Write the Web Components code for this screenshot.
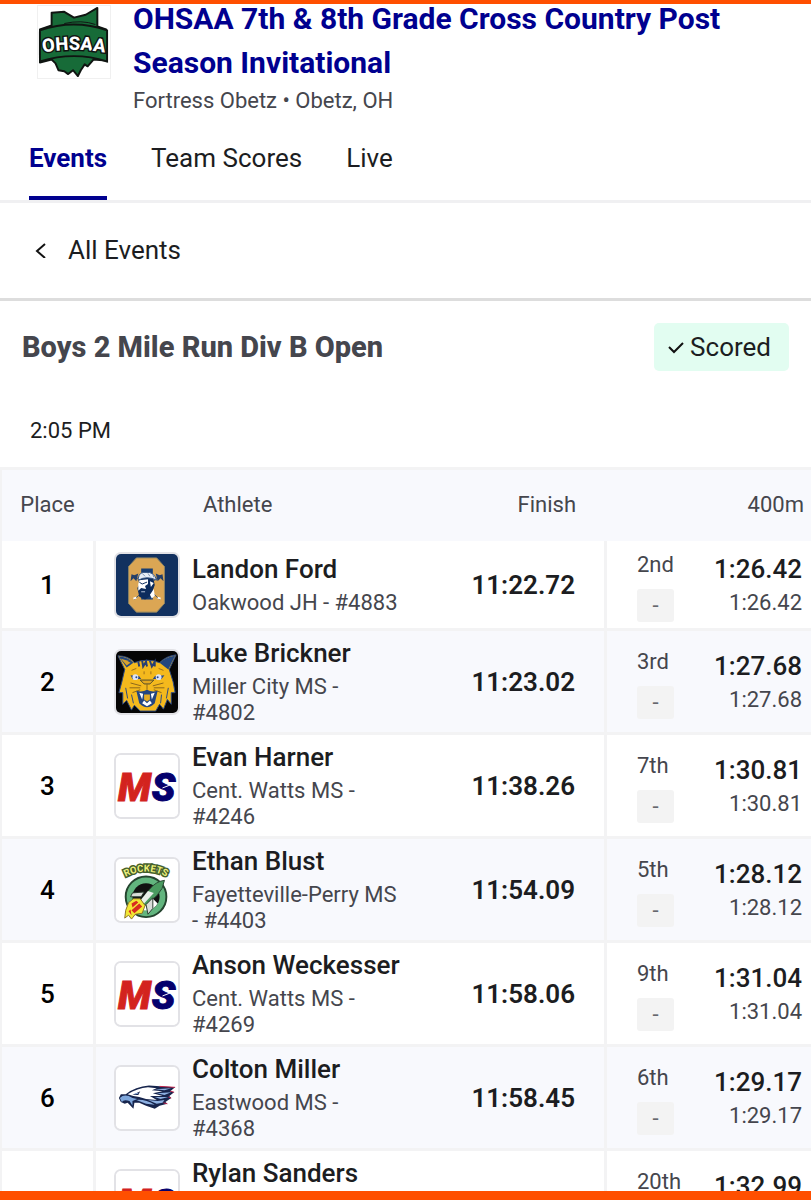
<!DOCTYPE html>
<html lang="en">
<head>
<meta charset="utf-8">
<meta name="viewport" content="width=device-width, initial-scale=1">
<title>Boys 2 Mile Run Div B Open - Results</title>
<style>
  body {
    margin: 0;
    font-family: Roboto, "Liberation Sans", sans-serif;
    color: #1c1d21;
    background: #fff;
    --brand: #00008f;
    --muted: #45464d;
    --line: #f3f3f4;
    --stripe: #f8f9fd;
  }
</style>
</head>
<body>
<page-frame>
  <meet-header>
    <span slot="title">OHSAA 7th &amp; 8th Grade Cross Country Post Season Invitational</span>
    <span slot="venue">Fortress Obetz &bull; Obetz, OH</span>
  </meet-header>
  <meet-tabs></meet-tabs>
  <back-link>All Events</back-link>
  <event-heading>
    Boys 2 Mile Run Div B Open
    <status-badge slot="status">Scored</status-badge>
    <span slot="time">2:05 PM</span>
  </event-heading>
  <results-table></results-table>
</page-frame>

<script>
const logos = {
  ohsaa: `
    <svg viewBox="0 0 74 74" role="img" aria-label="OHSAA">
      <path d="M14 7 L27 6 L37 12 L49 9 L61 2 L61 21 L70 24 V56 L57 55 L51 62 L48 60 L44 66 L41 72 L36 66 L31 70 L27 67 L21 66 L18 59 L14 55 L2 58 V24 L14 20Z" fill="#176b38" stroke="#101512" stroke-width="2" stroke-linejoin="round"/>
      <path d="M2 25 Q37 13 71 25 V57 Q37 46 2 57Z" fill="#176b38" stroke="#101512" stroke-width="2"/>
      <path d="M27 18 Q45 14 59 19" fill="none" stroke="#101512" stroke-width="1"/>
      <path id="ohsaaArc" d="M0 49 Q37 41 74 49" fill="none"/>
      <text font-family="Roboto, sans-serif" font-weight="800" font-size="19" text-anchor="middle" fill="#fff" stroke="#101512" stroke-width="3" paint-order="stroke"><textPath href="#ohsaaArc" startOffset="50%">OHSAA</textPath></text>
    </svg>`,
  oakwood: `
    <svg viewBox="0 0 64 64" role="img" aria-label="Oakwood JH">
      <rect width="64" height="64" fill="#12315f"/>
      <path d="M21 4 H42 L50 13 V51 L42 60 H21 L13 51 V13Z" fill="#dba654" stroke="#8c8465" stroke-width="1"/>
      <path d="M26 15 H38 V47 H26Z" fill="#173d72"/>
      <path d="M19 22 L45 47 M45 22 L19 47" stroke="#3a5370" stroke-width="1"/>
      <path d="M16 21 L19 22 L23 20 L21 28 L18 25 L15 28Z M48 21 L45 22 L41 20 L43 28 L46 25 L49 28Z" fill="#243f69"/>
      <path d="M23 25 L38 23 L40 32 L36 43 L30 47 L24 44 L22 35 L24 32Z" fill="#0c2c5d"/>
      <path d="M24 27 L33 26 L33 31 L30 33 L31 36 L26 35 L23 38 L23 31Z" fill="#fff"/>
      <path d="M24 29 L27 31 L32 29" fill="none" stroke="#0c2c5d" stroke-width="1"/>
      <path d="M35 28 L39 30 L36 34Z M35 42 L39 36 L40 43 L37 46Z" fill="#fff"/>
      <path d="M23 25 Q24 18 31 19 Q39 18 42 27 Q32 22 23 27Z" fill="#e6eef6" stroke="#33537f"/>
      <path d="M27 20 L30 23 M33 20 L35 23 M38 21 L39 24" stroke="#8394ad"/>
      <path d="M18 46 L21 45 M43 45 L46 46" stroke="#fff" stroke-width="2"/>
      <path d="M26 39 H30" stroke="#bac7db"/>
    </svg>`,
  miller: `
    <svg viewBox="0 0 64 64" role="img" aria-label="Miller City MS">
      <rect width="64" height="64" fill="#050505"/>
      <path d="M2 5 Q13 5 19 12 Q32 7 45 12 Q52 5 62 4 L55 19 L59 32 L61 43 L57 43 L57 55 L53 50 L49 60 L45 55 L41 62 H25 L19 56 L16 61 L11 51 L7 55 L7 43 L3 43 L6 32 L9 19Z" fill="#f4b91d" stroke="#294783" stroke-width="1"/>
      <path d="M45 12 Q52 6 61 5 L54 19Z" fill="#24477f"/>
      <path d="M3 6 Q12 6 18 12 L11 17Z" fill="#24477f"/>
      <path d="M5 8 Q11 9 15 12 L11 15Z" fill="#d8a22c"/>
      <path d="M23 11 L24 16 M27 10 L28 16 L31 11 L32 16 M35 10 L37 16 L40 11 L40 16" fill="none" stroke="#283f74" stroke-width="2"/>
      <path d="M16 20 L21 18 M44 18 L49 20 M29 21 V24 M36 21 V24" stroke="#9c6f1c"/>
      <path d="M15 25 L24 26 L26 29 L17 29Z M50 25 L40 26 L38 29 L47 29Z" fill="#294783"/>
      <circle cx="20" cy="27" r="3" fill="#dce4f8"/><circle cx="44" cy="27" r="3" fill="#dce4f8"/>
      <circle cx="21" cy="27" r="1" fill="#294783"/><circle cx="43" cy="27" r="1" fill="#294783"/>
      <path d="M25 30 H39 L35 34 H29Z" fill="#e4a820" stroke="#4d4a2c"/>
      <path d="M32 34 V40 M15 33 L26 36 M14 38 L25 38 M17 43 L25 40 M49 33 L38 36 M50 38 L39 38 M47 43 L39 40" stroke="#8a651c"/>
      <path d="M21 41 Q27 43 32 40 Q37 43 43 41 L40 54 Q36 58 32 58 Q28 58 24 54Z" fill="#244681"/>
      <path d="M24 43 L28 44 L27 50Z M40 43 L36 44 L37 50Z M27 54 L29 51 L32 54 L35 51 L37 54 L32 57Z" fill="#fff"/>
      <path d="M29 45 H35 V50 L32 52 L29 50Z" fill="#e4ac25"/>
      <path d="M10 38 L12 49 M16 45 L18 54 M54 38 L52 49 M47 45 L46 54" stroke="#294783"/>
    </svg>`,
  watts: `
    <svg viewBox="0 0 64 64" role="img" aria-label="Cent. Watts MS">
      <rect width="64" height="64" fill="#fff"/>
      <g font-family="Roboto, sans-serif" font-weight="900" font-style="italic" font-size="40" stroke-width="1">
        <text x="2" y="47" fill="#d3231e" stroke="#d3231e">M</text>
        <text x="37" y="47" fill="#05006d" stroke="#05006d">S</text>
      </g>
      <path d="M48 34 L61 29" stroke="#fff" stroke-width="1"/>
    </svg>`,
  fayetteville: `
    <svg viewBox="0 0 64 64" role="img" aria-label="Fayetteville-Perry MS">
      <rect width="64" height="64" fill="#fff"/>
      <circle cx="31" cy="39" r="21" fill="#62b57e" stroke="#25452f" stroke-width="2"/>
      <circle cx="31" cy="39" r="14" fill="#111"/>
      <path d="M20 48 A14 14 0 0 0 43 46 L34 37Z" fill="#fff"/>
      <path d="M50 22 Q41 23 34 32 L25 43 L30 48 L42 38 Q49 31 50 22Z" fill="#4a9b60" stroke="#2c4835"/>
      <path d="M33 33 L25 43 L29 46 L39 35Z" fill="#e8efe9"/>
      <path d="M29 34 L17 35 L15 39 L26 39Z M38 40 L38 51 L33 57 L31 47Z" fill="#d9ddd9" stroke="#273c2d"/>
      <path d="M25 41 L30 48 L27 56 L20 57 L16 62 L13 58 L9 61 L10 53 L13 45 L18 41Z" fill="#f3e735" stroke="#8a742a"/>
      <path d="M16 46 L21 43 L23 45 L17 50Z M16 53 L24 46 L27 49 L19 56Z M13 54 L15 52 L16 58Z" fill="#d82c20"/>
      <path id="rocketsArc" d="M7 20 Q31 6 55 20" fill="none"/>
      <text font-family="Roboto, sans-serif" font-weight="700" font-size="10" text-anchor="middle" fill="#eef07c" stroke="#45602c" stroke-width="3" paint-order="stroke"><textPath href="#rocketsArc" startOffset="50%">ROCKETS</textPath></text>
    </svg>`,
  eastwood: `
    <svg viewBox="0 0 64 64" role="img" aria-label="Eastwood MS">
      <rect width="64" height="64" fill="#fff"/>
      <path d="M10 28 Q20 20 34 19 L61 21 L56 25 L60 26 L55 30 L57 32 L51 36 L53 38 L45 40 L40 43 L31 40 L24 37 L19 37 L18 43 L12 37 L9 38 L5 36 L3 32 L5 28Z" fill="#17254d"/>
      <path d="M12 28 Q22 22 33 21 L42 22 L37 24 L48 25 L38 27 L48 30 L35 30 L42 34 L31 33 L24 31 L18 30Z" fill="#fff"/>
      <path d="M4 32 Q9 27 17 32 L22 33 L17 35 L17 40 L14 35 Q8 33 6 36Z" fill="#7ea7dc"/>
      <path d="M21 34 Q30 33 40 39 L31 38Z M33 34 L43 35 L50 34 L48 37 L42 38Z M40 31 L54 31 L46 33Z M42 27 L57 26 L50 29Z M40 23 L57 22 L50 24Z" fill="#8eb1e2"/>
      <path d="M17 29 L25 25 L23 29Z" fill="#17254d"/>
      <path d="M19 28 L23 27" stroke="#8eb1e2"/>
      <path d="M45 20 L61 21 M56 25 L60 26 M54 31 L57 32 M49 37 L53 38" stroke="#c4234a" stroke-width="1"/>
    </svg>`,
};

const results = [
  { place: 1, team: 'oakwood', name: 'Landon Ford', school: 'Oakwood JH - #4883', finish: '11:22.72', rank: '2nd', split: '1:26.42' },
  { place: 2, team: 'miller', name: 'Luke Brickner', school: 'Miller City MS - #4802', finish: '11:23.02', rank: '3rd', split: '1:27.68' },
  { place: 3, team: 'watts', name: 'Evan Harner', school: 'Cent. Watts MS - #4246', finish: '11:38.26', rank: '7th', split: '1:30.81' },
  { place: 4, team: 'fayetteville', name: 'Ethan Blust', school: 'Fayetteville-Perry MS - #4403', finish: '11:54.09', rank: '5th', split: '1:28.12' },
  { place: 5, team: 'watts', name: 'Anson Weckesser', school: 'Cent. Watts MS - #4269', finish: '11:58.06', rank: '9th', split: '1:31.04' },
  { place: 6, team: 'eastwood', name: 'Colton Miller', school: 'Eastwood MS - #4368', finish: '11:58.45', rank: '6th', split: '1:29.17' },
  { place: 7, team: 'watts', name: 'Rylan Sanders', school: 'Cent. Watts MS', finish: '', rank: '20th', split: '1:32.99' },
];

function attach(host, html) {
  const template = document.createElement('template');
  template.innerHTML = html;
  host.attachShadow({ mode: 'open' }).appendChild(template.content.cloneNode(true));
}

class PageFrame extends HTMLElement {
  constructor() {
    super();
    attach(this, `
      <style>
        :host {
          display: block;
          box-sizing: border-box;
          height: 100vh;
          overflow: hidden;
          border-top: 4px solid #ff4f00;
          border-bottom: 9px solid #ff4f00;
        }
      </style>
      <slot></slot>
    `);
  }
}

class MeetHeader extends HTMLElement {
  constructor() {
    super();
    attach(this, `
      <style>
        /* the page is scrolled a little way under the top bar */
        :host {
          display: flex;
          gap: 22px;
          margin-top: -7px;
          padding: 0 30px 0 37px;
        }
        .logo {
          flex: none;
          width: 74px;
          height: 74px;
          margin-top: 8px;
          box-sizing: border-box;
          border: 1px solid #f0f0f0;
        }
        svg { display: block; }
        h1 {
          margin: 0;
          color: var(--brand);
          font-size: 30px;
          line-height: 44px;
          font-weight: 700;
        }
        p {
          margin: 0;
          color: var(--muted);
          font-size: 22px;
          line-height: 32px;
        }
      </style>
      <div class="logo">${logos.ohsaa}</div>
      <div>
        <h1><slot name="title"></slot></h1>
        <p><slot name="venue"></slot></p>
      </div>
    `);
  }
}

class MeetTabs extends HTMLElement {
  constructor() {
    super();
    attach(this, `
      <style>
        :host {
          display: block;
          border-bottom: 3px solid #f0f0f2;
        }
        nav {
          display: flex;
          gap: 44px;
          padding: 25px 29px 0;
        }
        a {
          padding-bottom: 22px;
          border-bottom: 4px solid transparent;
          color: inherit;
          font-size: 26px;
          line-height: 32px;
          text-decoration: none;
        }
        a[aria-current] {
          color: var(--brand);
          border-color: var(--brand);
          font-weight: 700;
        }
      </style>
      <nav>
        <a href="#events" aria-current="page">Events</a>
        <a href="#scores">Team Scores</a>
        <a href="#live">Live</a>
      </nav>
    `);
  }
}

class BackLink extends HTMLElement {
  constructor() {
    super();
    attach(this, `
      <style>
        :host {
          display: block;
          padding: 31px 35px 32px;
          border-bottom: 3px solid #ddd;
        }
        a {
          display: inline-flex;
          align-items: center;
          gap: 21px;
          color: inherit;
          font-size: 26px;
          line-height: 32px;
          text-decoration: none;
        }
      </style>
      <a href="#all">
        <svg width="12" height="16" viewBox="0 0 12 16" aria-hidden="true"><path d="M10 2 L2 9 L10 16" fill="none" stroke="#111" stroke-width="2"/></svg>
        <slot></slot>
      </a>
    `);
  }
}

class StatusBadge extends HTMLElement {
  constructor() {
    super();
    attach(this, `
      <style>
        :host {
          display: inline-flex;
          align-items: center;
          gap: 6px;
          padding: 8px 18px 8px 14px;
          border-radius: 5px;
          background: #e2fdf1;
          color: #1c1d21;
          font-size: 26px;
          line-height: 32px;
          font-weight: 400;
        }
      </style>
      <svg width="16" height="14" viewBox="0 0 16 14" aria-hidden="true"><path d="M1 7 L6 12 L15 3" fill="none" stroke="#111" stroke-width="2"/></svg>
      <slot></slot>
    `);
  }
}

class EventHeading extends HTMLElement {
  constructor() {
    super();
    attach(this, `
      <style>
        :host { display: block; }
        .bar {
          display: flex;
          align-items: center;
          justify-content: space-between;
          padding: 22px 22px 0;
        }
        h2 {
          margin: 0;
          color: var(--muted);
          font-size: 29px;
          line-height: 44px;
          font-weight: 800;
        }
        .time {
          padding: 44px 30px 20px;
          font-size: 22px;
          line-height: 32px;
        }
      </style>
      <div class="bar"><h2><slot></slot></h2><slot name="status"></slot></div>
      <div class="time"><slot name="time"></slot></div>
    `);
  }
}

class TeamLogo extends HTMLElement {
  constructor() {
    super();
    attach(this, `
      <style>
        :host {
          display: block;
          flex: none;
          width: 62px;
          height: 62px;
          overflow: hidden;
          border: 2px solid #e2e2e6;
          border-radius: 7px;
        }
        svg { display: block; }
      </style>
      ${logos[this.getAttribute('team')] || ''}
    `);
  }
}

class ResultsTable extends HTMLElement {
  constructor() {
    super();
    const rows = results.map((r) => `
      <tr>
        <td class="place">${r.place}</td>
        <td class="athlete">
          <div class="person">
            <team-logo team="${r.team}"></team-logo>
            <div><div class="name">${r.name}</div><div class="sub">${r.school}</div></div>
          </div>
        </td>
        <td class="finish">${r.finish}</td>
        <td class="split">
          <div class="lap">
            <div><div class="rank">${r.rank}</div><div class="chip">-</div></div>
            <div class="times"><div class="name">${r.split}</div><div class="sub">${r.split}</div></div>
          </div>
        </td>
      </tr>`).join('');

    attach(this, `
      <style>
        :host { display: block; }
        table {
          width: 100%;
          table-layout: fixed;
          border-collapse: separate;
          border-spacing: 0;
          border-top: 3px solid var(--line);
          border-left: 2px solid var(--line);
        }
        th {
          height: 68px;
          padding: 0 0 3px;
          background: var(--stripe);
          color: var(--muted);
          font-size: 22px;
          font-weight: 400;
        }
        th.place { width: 91px; padding-right: 3px; }
        th.athlete { padding-left: 107px; text-align: left; }
        th.finish { width: 158px; padding-right: 31px; text-align: right; }
        th.split { width: 197px; padding-right: 7px; text-align: right; }
        td {
          padding: 6px 0;
          border-bottom: 3px solid var(--line);
          vertical-align: middle;
        }
        tbody tr + tr { height: 104px; }
        tbody tr + tr .person .sub { min-height: 52px; }
        tbody tr:nth-child(even) { background: var(--stripe); }
        td.place {
          border-right: 3px solid var(--line);
          color: #000;
          font-size: 26px;
          line-height: 32px;
          font-weight: 500;
          text-align: center;
        }
        td.athlete { padding-left: 18px; padding-right: 16px; }
        td.finish {
          padding-right: 29px;
          border-right: 3px solid var(--line);
          font-size: 26px;
          line-height: 32px;
          font-weight: 600;
          text-align: right;
        }
        td.split { padding-left: 30px; padding-right: 9px; }
        .person {
          display: flex;
          align-items: center;
          gap: 12px;
        }
        .name {
          margin-bottom: 5px;
          font-size: 26px;
          line-height: 32px;
          font-weight: 500;
        }
        .sub {
          color: var(--muted);
          font-size: 22px;
          line-height: 26px;
        }
        .lap {
          display: flex;
          align-items: center;
          justify-content: space-between;
        }
        .times { text-align: right; }
        .rank {
          margin-bottom: 6px;
          color: var(--muted);
          font-size: 22px;
          line-height: 36px;
        }
        .chip {
          width: 37px;
          border-radius: 3px;
          background: #f3f3f3;
          color: #66676d;
          font-size: 22px;
          line-height: 33px;
          text-align: center;
        }
      </style>
      <table>
        <thead>
          <tr>
            <th class="place" scope="col">Place</th>
            <th class="athlete" scope="col">Athlete</th>
            <th class="finish" scope="col">Finish</th>
            <th class="split" scope="col">400m</th>
          </tr>
        </thead>
        <tbody>${rows}</tbody>
      </table>
    `);
  }
}

customElements.define('page-frame', PageFrame);
customElements.define('meet-header', MeetHeader);
customElements.define('meet-tabs', MeetTabs);
customElements.define('back-link', BackLink);
customElements.define('status-badge', StatusBadge);
customElements.define('event-heading', EventHeading);
customElements.define('team-logo', TeamLogo);
customElements.define('results-table', ResultsTable);
</script>
</body>
</html>
